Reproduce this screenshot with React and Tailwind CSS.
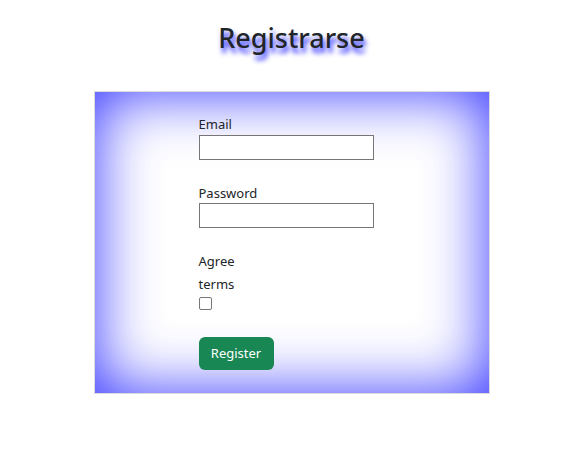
export default function App() {
  return (
    <div className="w-[583px] h-[461px] bg-white text-[#212529] font-['Noto_Sans',sans-serif] flex flex-col items-center">
      <h1 className="mt-[20px] h-[36px] leading-[36px] text-[27px] font-medium text-[#212529] [text-shadow:2px_5px_5px_#2a2aff]">
        Registrarse
      </h1>
      <div className="mt-[35px] w-[396px] h-[303px] border border-[#dcdcdc] shadow-[inset_0_0_62px_#3030ff] pl-[104px] pt-[22px]">
        <form className="flex flex-col text-[13px]" onSubmit={(e) => e.preventDefault()}>
          <label className="h-[21px] leading-[21px]">Email</label>
          <input type="text" className="w-[175px] h-[25px] border border-[#767676] bg-white outline-none" />
          <label className="mt-[23px] h-[20px] leading-[20px]">Password</label>
          <input type="password" className="w-[175px] h-[25px] border border-[#767676] bg-white outline-none" />
          <label className="mt-[22px] w-min leading-[23px]">Agree terms</label>
          <input type="checkbox" className="mt-[1px] appearance-none w-[13px] h-[13px] border border-[#767676] rounded-[2px] bg-white" />
          <button type="submit" className="mt-[27px] w-[75px] h-[33px] rounded-[6px] bg-[#198754] text-white text-[13px] leading-[21px]">
            Register
          </button>
        </form>
      </div>
    </div>
  );
}
